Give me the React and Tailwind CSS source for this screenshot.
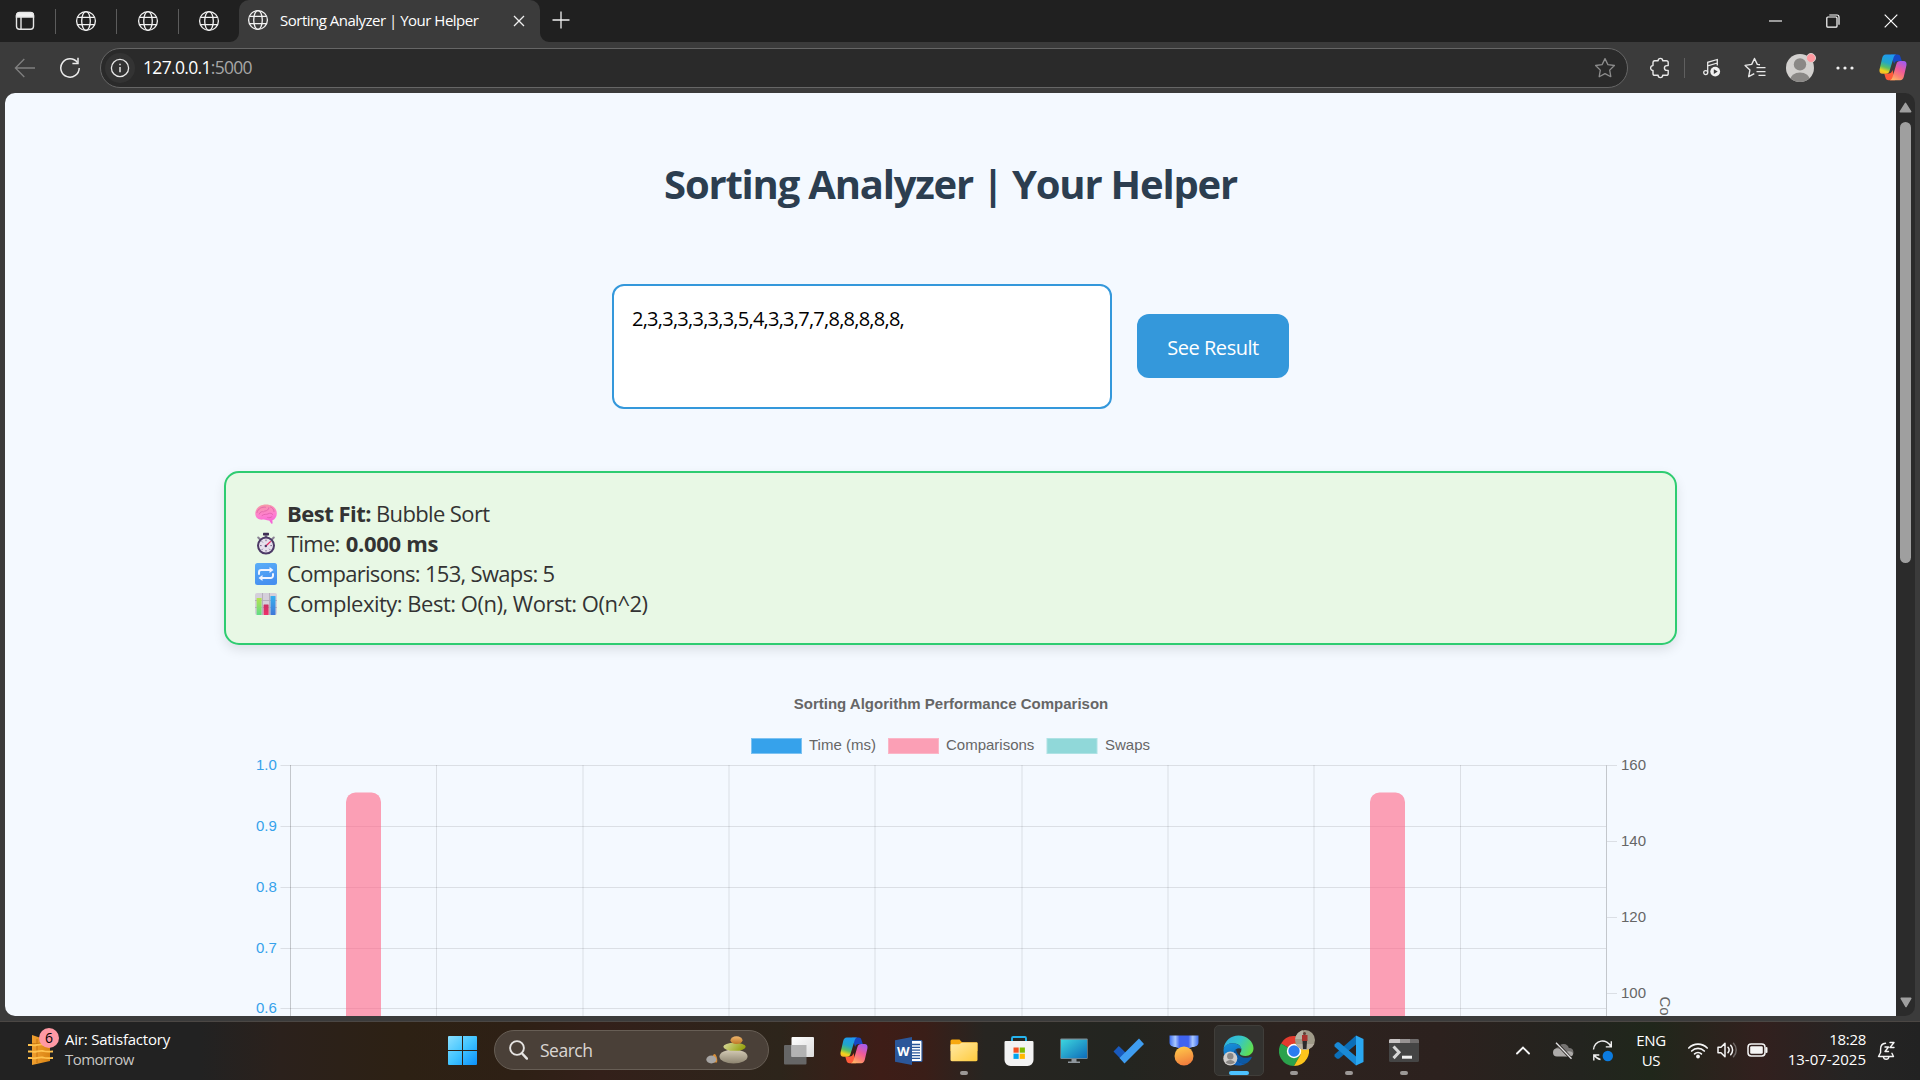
import React from 'react';

const Globe = () => (
  <svg width="22" height="22" viewBox="0 0 22 22" fill="none" stroke="#f2f2f2" strokeWidth="1.3">
    <circle cx="11" cy="11" r="9.4" />
    <ellipse cx="11" cy="11" rx="4.3" ry="9.4" />
    <path d="M2.4 7.4h17.2M2.4 14.6h17.2" />
  </svg>
);

const TabSeparator = () => <div className="h-[25px] w-px bg-[#5c5c5c]" />;

const CopilotIcon = ({ id }) => (
  <svg width="28" height="27" viewBox="0 0 28 27">
    <defs>
      <linearGradient id={id + 'a'} x1="0.5" y1="0" x2="0.2" y2="1">
        <stop offset="0" stopColor="#1f9af0" />
        <stop offset="0.4" stopColor="#22a6c8" />
        <stop offset="0.65" stopColor="#5cc062" />
        <stop offset="0.85" stopColor="#f3d21c" />
        <stop offset="1" stopColor="#f7b32b" />
      </linearGradient>
      <linearGradient id={id + 'b'} x1="0.8" y1="0" x2="0.3" y2="1">
        <stop offset="0" stopColor="#a15bf0" />
        <stop offset="0.45" stopColor="#ee5a9a" />
        <stop offset="0.75" stopColor="#fb7f72" />
        <stop offset="1" stopColor="#fdb268" />
      </linearGradient>
    </defs>
    <path d="M12 0.6h6.6c1.6 0 2.400 0.800 2.800 2.200l1.400 4.300h-3.800c-2.400 0-3.300 1-3.900 3z" fill="#1747c4" />
    <path d="M16 26.200H9.400c-1.600 0-2.400-0.800-2.800-2.200L5.200 19.600h4.400c2 0 3.200-1.200 3.900-3.600z" fill="#ff5b3a" />
    <path d="M6.8 0.6h10.4c-1.6 0.5-2.3 1.7-2.9 3.8l-3.7 12.3c-0.7 2.2-1.8 3-3.9 3H3.6C1 19.7 0 17.7 0.6 15.2L3.2 4C3.8 1.8 4.8 0.6 6.8 0.6z" fill={'url(#' + id + 'a)'} />
    <path d="M21.2 26.2H10.8c1.6-0.5 2.3-1.7 2.9-3.8l3.7-12.3c0.7-2.2 1.8-3 3.9-3h3.1c2.6 0 3.6 2 3 4.5l-2.6 11.2c-0.6 2.2-1.6 3.4-3.6 3.4z" fill={'url(#' + id + 'b)'} />
  </svg>
);

function TabStrip() {
  return (
    <div className="flex h-[42px] items-center bg-[#202020]">
      <svg className="ml-[15px]" width="20" height="20" viewBox="0 0 20 20" fill="none" stroke="#e6e6e6" strokeWidth="1.4">
        <rect x="1.5" y="1.8" width="17" height="16.4" rx="3" />
        <path d="M1.5 6V4.5a3 3 0 0 1 3-3h11a3 3 0 0 1 3 3V6z" fill="#f2f2f2" />
        <path d="M6 6v12" />
      </svg>
      <div className="flex items-center pl-[20px]">
        <TabSeparator />
        <div className="flex w-[60px] justify-center pr-[1px]"><Globe /></div>
        <TabSeparator />
        <div className="flex w-[61px] justify-center"><Globe /></div>
        <TabSeparator />
        <div className="flex w-[60px] justify-center"><Globe /></div>
      </div>
      <div className="relative flex h-[42px] w-[301px] items-center rounded-t-[10px] bg-[#3b3b3b]">
        <svg className="absolute bottom-0 -left-[9px]" width="9" height="9"><path d="M9 0v9H0a9 9 0 0 0 9-9z" fill="#3b3b3b" /></svg>
        <svg className="absolute bottom-0 -right-[9px]" width="9" height="9"><path d="M0 0v9h9a9 9 0 0 1-9-9z" fill="#3b3b3b" /></svg>
        <div className="ml-[8px] -mt-[2px]"><Globe /></div>
        <span className="ml-[11px] -mt-[3px] w-[220px] text-[15px] leading-[20px] tracking-[-0.5px] whitespace-nowrap text-white">Sorting Analyzer | Your Helper</span>
        <svg className="ml-[13px]" width="12" height="12" viewBox="0 0 12 12" stroke="#f0f0f0" strokeWidth="1.3"><path d="M1 1l10 10M11 1L1 11" /></svg>
      </div>
      <svg className="ml-[12px] -mt-[3px]" width="18" height="18" viewBox="0 0 18 18" stroke="#f0f0f0" strokeWidth="1.3"><path d="M9 0.5v17M0.5 9h17" /></svg>
      <div className="flex-1" />
      <svg className="mr-[44px]" width="13" height="13" viewBox="0 0 13 13"><path d="M0 6h13" stroke="#fff" strokeWidth="1.1" /></svg>
      <svg className="mr-[44px]" width="14" height="14" viewBox="0 0 14 14" fill="none" stroke="#fff" strokeWidth="1.2">
        <rect x="0.8" y="3" width="10.2" height="10.2" rx="1" />
        <path d="M3.3 1h7.7a2 2 0 0 1 2 2v7.8" />
      </svg>
      <svg className="mr-[22px]" width="14" height="14" viewBox="0 0 14 14" stroke="#fff" strokeWidth="1.2"><path d="M0.7 0.7l12.6 12.6M13.3 0.7L0.7 13.3" /></svg>
    </div>
  );
}

function Toolbar() {
  return (
    <div className="flex h-[51px] items-center bg-[#3b3b3b]">
      <svg className="ml-[14px]" width="22" height="20" viewBox="0 0 22 20" fill="none" stroke="#808080" strokeWidth="1.3"><path d="M21 10H1.5M10.3 1L1.4 10l8.9 9" /></svg>
      <svg className="ml-[23px]" width="22" height="22" viewBox="0 0 22 22" fill="none" stroke="#ececec" strokeWidth="1.5">
        <path d="M18.5 5.6A9.2 9.2 0 1 0 20.2 11" />
        <path d="M19 0.8v5.6h-5.6" />
      </svg>
      <div className="ml-[19px] flex h-[40px] w-[1528px] items-center rounded-full border border-[#666] bg-[#2a2a2a]">
        <div className="ml-[4px] flex h-[30px] w-[30px] items-center justify-center rounded-full bg-[#333]">
          <svg width="20" height="20" viewBox="0 0 20 20" fill="none" stroke="#e8e8e8" strokeWidth="1.3">
            <circle cx="10" cy="10" r="8.6" />
            <path d="M10 9v5.2M10 5.7v1.6" strokeWidth="1.5" />
          </svg>
        </div>
        <span className="-mt-[1px] ml-[8px] text-[17.5px] leading-[24px] tracking-[-0.68px] text-white">127.0.0.1<span className="text-[#a6a6a6]">:5000</span></span>
        <div className="flex-1" />
        <svg className="mr-[11px]" width="22" height="22" viewBox="0 0 22 22" fill="none" stroke="#8c8c8c" strokeWidth="1.3" strokeLinejoin="round"><path d="M11 1.6l2.9 6 6.5 0.9-4.7 4.6 1.1 6.6L11 16.6l-5.8 3.1 1.1-6.6L1.6 8.5l6.5-0.9z" /></svg>
      </div>
      <svg className="ml-[22px]" width="20" height="22" viewBox="0 0 20 22" fill="none" stroke="#e8e8e8" strokeWidth="1.4" strokeLinejoin="round">
        <path d="M4.5 3.7h3.6a2.3 2.3 0 0 1 4.6 0h3.6a1.9 1.9 0 0 1 1.9 1.9v3h-1.4a2.4 2.4 0 0 0 0 4.8h1.4v3a1.9 1.9 0 0 1-1.9 1.9h-3.6a2.3 2.3 0 0 1-4.6 0H4.9a1.9 1.9 0 0 1-1.9-1.9v-3a2.4 2.4 0 0 1 0-4.8v-3a1.9 1.9 0 0 1 1.5-1.9z" />
      </svg>
      <div className="ml-[14px] h-[20px] w-px bg-[#5f5f5f]" />
      <svg className="ml-[18px]" width="18" height="20" viewBox="0 0 18 20" fill="none" stroke="#e8e8e8" strokeWidth="1.3">
        <circle cx="2.7" cy="14.6" r="2" />
        <path d="M4.7 14.6V4.3l9.6-2.8v6M4.7 7.8l9.6-2.8" />
        <circle cx="12.2" cy="13.6" r="4.9" fill="#f0f0f0" stroke="none" />
        <path d="M10.8 11.2v4.8l3.9-2.4z" fill="#3b3b3b" stroke="none" />
      </svg>
      <svg className="ml-[23px]" width="22" height="22" viewBox="0 0 22 22" fill="none" stroke="#e8e8e8" strokeWidth="1.4" strokeLinejoin="round">
        <path d="M16 7.8l-2.7-0.4-2.8-5.9-2.8 5.9-6.6 1 4.8 4.6-1.2 6.7 5.6-3" />
        <path d="M12.5 10.6h9M12.5 14.6h9M14.5 18.4h7" strokeWidth="1.3" />
      </svg>
      <div className="relative ml-[20px] h-[28px] w-[28px]">
        <svg width="28" height="28" viewBox="0 0 28 28">
          <defs><clipPath id="av"><circle cx="14" cy="14" r="14" /></clipPath></defs>
          <g clipPath="url(#av)"><rect width="28" height="28" fill="#d2d0ce" /><circle cx="14" cy="10.4" r="6.2" fill="#8a8886" /><ellipse cx="14" cy="26.5" rx="10" ry="8" fill="#8a8886" /></g>
        </svg>
        <div className="absolute -top-[1px] right-[-2px] h-[10px] w-[10px] rounded-full border border-[#d9d0ce] bg-[#ff99a0]" />
      </div>
      <svg className="ml-[22px]" width="18" height="4" viewBox="0 0 18 4" fill="#f0f0f0"><circle cx="2" cy="2" r="1.6" /><circle cx="9" cy="2" r="1.6" /><circle cx="16" cy="2" r="1.6" /></svg>
      <div className="ml-[25px]"><CopilotIcon id="ct" /></div>
    </div>
  );
}

const Brain = () => (
  <svg width="22" height="22" viewBox="0 0 22 22">
    <defs><linearGradient id="br" x1="0.3" y1="0" x2="0.5" y2="1"><stop offset="0" stopColor="#f59aa5" /><stop offset="0.55" stopColor="#ff7fd0" /><stop offset="1" stopColor="#f563d6" /></linearGradient></defs>
    <path d="M0.3 10.500C0.300 5.500 4.800 1.600 11 1.600c6.400 0 10.800 3.600 10.800 8.800 0 3.400-2 6-4.400 6.800l0.200 3.400-1.200 0.200-2.200-3.400c-2.800 0.300-3.800-1.200-6-0.800C3.600 17.200 0.300 14.800 0.300 10.500z" fill="url(#br)" />
    <path d="M2 9.500C3 5.500 7 3.600 10.500 4.200M4.300 11c0.600-2.200 2.700-2.700 4.200-2.200M9.500 8.200c3-0.300 4.300-1.800 4.300-3.400M15.500 4c2 0.800 3.500 2.400 3.500 4.500M7 12.500c2.400-2 4.600-0.600 6-1.600 1.800-1.200 4-0.600 4.800 0.600M12.600 14.500c1.800 0.600 3.200 0.200 4.300-0.800" fill="none" stroke="#dd5fa8" strokeWidth="0.8" strokeLinecap="round" />
  </svg>
);

const Stopwatch = () => (
  <svg width="22" height="24" viewBox="0 0 22 24">
    <rect x="8" y="0.8" width="6" height="2.6" rx="0.6" fill="#3f2f55" />
    <rect x="9.7" y="3" width="2.6" height="2.5" fill="#6f6480" />
    <path d="M3.2 5.500l2 2M18.800 5.500l-2 2" stroke="#8a8294" strokeWidth="2" strokeLinecap="round" />
    <circle cx="11" cy="13.6" r="8" fill="#e6e0ec" stroke="#4c3a66" strokeWidth="2" />
    <path d="M11 7.6v1.6M11 18v1.6M5 13.6h1.6M15.4 13.6h1.6M6.8 9.4l1 1M6.8 17.8l1-1M15.2 17.8l-1-1" stroke="#6c5f80" strokeWidth="0.9" />
    <path d="M10.6 14.2l4.8-4.6" stroke="#e8265e" strokeWidth="1.3" strokeLinecap="round" />
    <circle cx="10.8" cy="14" r="1.2" fill="#4c3a66" />
  </svg>
);

const Repeat = () => (
  <svg width="22" height="22" viewBox="0 0 22 22">
    <defs><linearGradient id="rp" x1="0" y1="0" x2="0.3" y2="1"><stop offset="0" stopColor="#5aaef8" /><stop offset="1" stopColor="#4690f0" /></linearGradient></defs>
    <rect width="22" height="22" rx="2.5" fill="url(#rp)" />
    <path d="M4 11V9.300a2.300 2.300 0 0 1 2.300-2.300H15M18 11v1.700a2.300 2.300 0 0 1-2.300 2.300H7" fill="none" stroke="#f0f4ff" strokeWidth="2" strokeLinecap="round" />
    <path d="M14.500 4l4 3-4 3zM7.500 12l-4 3 4 3z" fill="#f0f4ff" />
  </svg>
);

const BarChartIcon = () => (
  <svg width="22" height="22" viewBox="0 0 22 22">
    <defs>
      <linearGradient id="bg1" x1="0" y1="0" x2="0" y2="1"><stop offset="0" stopColor="#b6e34f" /><stop offset="1" stopColor="#5fdc86" /></linearGradient>
      <linearGradient id="bg2" x1="0" y1="0" x2="0" y2="1"><stop offset="0" stopColor="#c92f62" /><stop offset="1" stopColor="#f0306a" /></linearGradient>
      <linearGradient id="bg3" x1="0" y1="0" x2="0" y2="1"><stop offset="0" stopColor="#35b0ee" /><stop offset="1" stopColor="#3f78d8" /></linearGradient>
    </defs>
    <rect width="22" height="22" rx="2" fill="#d5d0da" />
    <path d="M7.500 0v22M14.500 0v22M0 7.500h22M0 14.500h22" stroke="#b2acb9" strokeWidth="0.9" />
    <rect x="1.6" y="5" width="5" height="17" rx="0.5" fill="url(#bg1)" />
    <rect x="8.6" y="11.5" width="5" height="10.5" rx="0.5" fill="url(#bg2)" />
    <rect x="15.5" y="3" width="5" height="19" rx="0.5" fill="url(#bg3)" />
  </svg>
);

function ResultLine({ icon, children }) {
  return (
    <div className="flex h-[30px] items-center">
      <div className="mt-[2px] shrink-0">{icon}</div>
      {children}
    </div>
  );
}

function ResultBox() {
  return (
    <div className="mx-[219px] mt-[62px] flex h-[174px] flex-col rounded-[15px] border-2 border-[#2ecc71] bg-[#e8f8e5] pt-[25px] pl-[29px] text-[22px] leading-[30px] whitespace-nowrap text-[#333] shadow-[0_5px_12px_rgba(0,0,0,0.1)]">
      <ResultLine icon={<Brain />}><b className="ml-[10px] tracking-[-0.52px]">Best Fit:</b><span className="ml-[5px] tracking-[-0.62px]">Bubble Sort</span></ResultLine>
      <ResultLine icon={<Stopwatch />}><span className="ml-[10px] tracking-[-0.7px]">Time:</span><b className="ml-[6px] tracking-[-0.28px]">0.000 ms</b></ResultLine>
      <ResultLine icon={<Repeat />}><span className="ml-[10px] tracking-[-0.69px]">Comparisons: 153, Swaps: 5</span></ResultLine>
      <ResultLine icon={<BarChartIcon />}><span className="ml-[10px] tracking-[-0.49px]">Complexity: Best: O(n), Worst: O(n^2)</span></ResultLine>
    </div>
  );
}

const LEFT_TICKS = [['1.0', 765.5], ['0.9', 826.5], ['0.8', 887.5], ['0.7', 948.5], ['0.6', 1008.5]];
const RIGHT_TICKS = [['160', 765.5], ['140', 841.5], ['120', 917.5], ['100', 993.5]];
const COLUMNS = [436.5, 583, 729, 875, 1022, 1168, 1314, 1460.5];
const BARS = [346, 1370];

function Chart() {
  return (
    <svg className="mx-[219px] mt-[35px] block h-[336px] w-[1453px]" viewBox="224 680 1453 336" fontFamily='"Liberation Sans", Arial, sans-serif' fontSize="15">
      <text x="951" y="709" textAnchor="middle" fontWeight="bold" fill="#666">Sorting Algorithm Performance Comparison</text>
      <g strokeWidth="1">
        <rect x="751.5" y="738.5" width="50" height="15" fill="#36a2eb" stroke="#7cc2f2" />
        <rect x="888.5" y="738.5" width="50" height="15" fill="#fb9fb5" stroke="#fbb6c7" />
        <rect x="1047" y="738.5" width="50" height="15" fill="#90d8d9" stroke="#aee2e4" />
      </g>
      <g fill="#666">
        <text x="809" y="750">Time (ms)</text>
        <text x="946" y="750">Comparisons</text>
        <text x="1105" y="750">Swaps</text>
      </g>
      <g stroke="#000" strokeOpacity="0.1">
        {LEFT_TICKS.map(([l, y]) => <path key={l} d={`M280.5 ${y}H1606`} />)}
        {COLUMNS.map((x) => <path key={x} d={`M${x} 765V1016`} />)}
        {RIGHT_TICKS.map(([l, y]) => <path key={l} d={`M1607 ${y}h10`} />)}
      </g>
      <path d="M290.5 765V1016M1606.5 765V1016" stroke="#000" strokeOpacity="0.2" />
      {BARS.map((x) => <path key={x} d={`M${x} 1016V802a9.5 9.5 0 0 1 9.5-9.5h16a9.500 9.500 0 0 1 9.500 9.500V1016z`} fill="#ff6384" fillOpacity="0.6" />)}
      <g fill="#36a2eb" textAnchor="end">
        {LEFT_TICKS.map(([l, y]) => <text key={l} x="276.8" y={y + 4.5}>{l}</text>)}
      </g>
      <g fill="#666">
        {RIGHT_TICKS.map(([l, y]) => <text key={l} x="1621" y={y + 4.5}>{l}</text>)}
        <text transform="translate(1659.5 996.5) rotate(90)">Co</text>
      </g>
    </svg>
  );
}

function Page() {
  return (
    <div className="flex h-[923px] w-[1910px] overflow-hidden rounded-[10px] bg-[#2b2b2b]">
      <main className="flex h-[923px] w-[1891px] shrink-0 flex-col overflow-hidden bg-[#f4f9ff]">
        <h1 className="mt-[61px] h-[60px] text-center text-[40px] leading-[60px] font-bold tracking-[-1.21px] text-[#2c3e50]">Sorting Analyzer | Your Helper</h1>
        <div className="mt-[70px] flex h-[125px] justify-center gap-[25px]">
          <div className="h-[125px] w-[500px] rounded-[12px] border-2 border-[#3498db] bg-white pt-[19px] pl-[18px] text-[20px] leading-[28px] tracking-[-0.75px] text-black">2,3,3,3,3,3,3,5,4,3,3,7,7,8,8,8,8,8,</div>
          <button className="mt-[30px] h-[64px] w-[152px] rounded-[12px] bg-[#3498db] pt-[4px] text-[20px] tracking-[-0.46px] text-white">See Result</button>
        </div>
        <ResultBox />
        <Chart />
      </main>
      <div className="flex flex-1 flex-col items-center">
        <svg className="mt-[9px]" width="13" height="11" viewBox="0 0 13 11"><path d="M6.5 1.3L11.7 9.700H1.300z" fill="#9f9f9f" stroke="#9f9f9f" strokeLinejoin="round" strokeWidth="1.5" /></svg>
        <div className="mt-[9px] h-[441px] w-[11px] rounded-full bg-[#9f9f9f]" />
        <div className="flex-1" />
        <svg className="mb-[8px]" width="12" height="11" viewBox="0 0 12 11"><path d="M6 9.500L10.800 1.300H1.200z" fill="#9f9f9f" stroke="#9f9f9f" strokeLinejoin="round" strokeWidth="1.5" /></svg>
      </div>
    </div>
  );
}

const Weather = () => (
  <svg width="27" height="32" viewBox="0 0 27 32">
    <defs><linearGradient id="we" x1="0" y1="0" x2="1" y2="0"><stop offset="0" stopColor="#f0a030" /><stop offset="1" stopColor="#d98312" /></linearGradient></defs>
    <path d="M4 1l18 6v20L4 31z" fill="url(#we)" />
    <path d="M9 5v24M4 9.500c5 1 8-1.500 18 0" fill="none" stroke="#c87510" strokeWidth="1" />
    <path d="M0 11h3.500c4 1.500 7-1.500 11.500-0.500 3 1 6 0.500 10 0.500M0 17.500h3.500c4 1.500 7-1.500 11.500-0.500 3 1 6 0.500 10 0.500M0 24h3.500c4 1.500 7-1.500 11.500-0.500 3 1 6 0.500 10 0.500" fill="none" stroke="#ffc24e" strokeWidth="1.8" />
  </svg>
);

const Pebbles = () => (
  <svg width="42" height="28" viewBox="0 0 42 28">
    <defs>
      <linearGradient id="p1" x1="0" y1="0" x2="0" y2="1"><stop offset="0" stopColor="#d6cdb8" /><stop offset="1" stopColor="#8d8470" /></linearGradient>
      <linearGradient id="p2" x1="0" y1="0" x2="1" y2="0.3"><stop offset="0" stopColor="#d9d9a0" /><stop offset="1" stopColor="#98a412" /></linearGradient>
      <linearGradient id="p3" x1="0" y1="0" x2="0" y2="1"><stop offset="0" stopColor="#eeb56c" /><stop offset="1" stopColor="#bd7424" /></linearGradient>
    </defs>
    <path d="M6 26.500c-1-4 1-8.500 2.500-8.500S12 23 11 26.500z" fill="#d88d35" />
    <ellipse cx="5.3" cy="23.5" rx="5" ry="3.9" fill="#a7a5a4" />
    <ellipse cx="27.5" cy="20.5" rx="14" ry="7" fill="url(#p1)" />
    <ellipse cx="28.5" cy="10.8" rx="11.2" ry="4" fill="url(#p2)" />
    <ellipse cx="30.5" cy="4.2" rx="6" ry="3.9" fill="url(#p3)" />
  </svg>
);

const WindowsLogo = () => (
  <svg width="29" height="29" viewBox="0 0 29 29">
    <defs><linearGradient id="wl" gradientUnits="userSpaceOnUse" x1="0" y1="0" x2="29" y2="29"><stop offset="0" stopColor="#8be0ff" /><stop offset="0.5" stopColor="#41c4ff" /><stop offset="1" stopColor="#0b90fa" /></linearGradient></defs>
    <path d="M0 1a1 1 0 0 1 1-1h13v14H0zM15 0h13a1 1 0 0 1 1 1v13H15zM0 15h14v14H1a1 1 0 0 1-1-1zM15 15h14v13a1 1 0 0 1-1 1H15z" fill="url(#wl)" />
  </svg>
);

const TaskView = () => (
  <svg width="30" height="28" viewBox="0 0 30 28">
    <defs><linearGradient id="tv" x1="0" y1="0" x2="1" y2="1"><stop offset="0" stopColor="#fff" /><stop offset="1" stopColor="#dcdcdc" /></linearGradient></defs>
    <rect x="0" y="8" width="22.5" height="19.5" rx="1" fill="#666" />
    <rect x="7.5" y="0" width="22.5" height="20" rx="1" fill="url(#tv)" />
    <path d="M7.500 8h15v12h-15z" fill="#a8a8a8" opacity="0.85" />
  </svg>
);

const Word = () => (
  <svg width="28" height="28" viewBox="0 0 28 28">
    <rect x="13" y="3.5" width="14" height="21" rx="1" fill="#fff" stroke="#2b579a" strokeWidth="1.2" />
    <path d="M17 7.500h8M17 10.300h8M17 13.100h8M17 15.900h8M17 18.700h8M17 21.300h8" stroke="#2b579a" strokeWidth="1.3" />
    <path d="M0 3.200L17 0v28L0 24.800z" fill="#2b579a" />
    <text x="8.4" y="18.8" fontFamily='"Open Sans", sans-serif' fontSize="13" fontWeight="bold" fill="#fff" textAnchor="middle">W</text>
  </svg>
);

const Folder = () => (
  <svg width="28" height="24" viewBox="0 0 28 24">
    <defs><linearGradient id="fo" x1="0" y1="0" x2="1" y2="1"><stop offset="0" stopColor="#ffe9a6" /><stop offset="1" stopColor="#ffcb3d" /></linearGradient></defs>
    <path d="M0.500 2a1.500 1.500 0 0 1 1.500-1.500h7.500L12 3.200h14.500A1 1 0 0 1 27.500 4v8H0.500z" fill="#f8a90f" />
    <path d="M0.500 6.300c0-0.700 0.500-1.100 1.200-1.100h7.500l2.800-1.700h14.500c0.600 0 1 0.400 1 1v16.300c0 0.900-0.500 1.400-1.400 1.400H1.900c-0.900 0-1.400-0.500-1.400-1.400z" fill="url(#fo)" />
  </svg>
);

const Store = () => (
  <svg width="30" height="30" viewBox="0 0 30 30">
    <path d="M8 6V2.200A1.200 1.200 0 0 1 9.200 1h11.600A1.200 1.200 0 0 1 22 2.200V6" fill="none" stroke="#26b4ee" strokeWidth="1.9" />
    <path d="M0.500 6.200a1.200 1.200 0 0 1 1.200-1.200h26.600a1.200 1.200 0 0 1 1.200 1.200V24a6 6 0 0 1-6 6h-17a6 6 0 0 1-6-6z" fill="#f3f3f3" />
    <path d="M9.500 11.500h5.200v5.200H9.500z" fill="#f25022" /><path d="M15.700 11.500h5.200v5.200h-5.200z" fill="#7fba00" />
    <path d="M9.500 17.700h5.200v5.200H9.500z" fill="#00a4ef" /><path d="M15.700 17.700h5.200v5.200h-5.200z" fill="#ffb900" />
  </svg>
);

const Monitor = () => (
  <svg width="28" height="26" viewBox="0 0 28 26">
    <defs><linearGradient id="mo" x1="0" y1="0" x2="1" y2="1"><stop offset="0" stopColor="#3cd5de" /><stop offset="1" stopColor="#0e6bb8" /></linearGradient></defs>
    <rect x="0.3" y="0.5" width="27.4" height="20.5" rx="1" fill="#7d8b93" />
    <rect x="1" y="1.7" width="26" height="18.5" fill="url(#mo)" />
    <path d="M11.500 21h5v2.500h3.500v1.500H8v-1.500h3.500z" fill="#8f979d" />
  </svg>
);

const ToDo = () => (
  <svg width="32" height="26" viewBox="0 0 32 26">
    <path d="M0.500 13.500L5.800 8l9 8.800-3.600 7.700z" fill="#195abd" />
    <path d="M26 0.500l5 5.500-19.500 19.500-5-5.500z" fill="#3f9df0" />
  </svg>
);

const Medal = () => (
  <svg width="30" height="31" viewBox="0 0 30 31">
    <defs>
      <linearGradient id="m1" x1="0" y1="0" x2="1" y2="0"><stop offset="0" stopColor="#3f6ff0" /><stop offset="0.2" stopColor="#a9c8ff" /><stop offset="0.35" stopColor="#3f63f0" /><stop offset="0.65" stopColor="#3f63f0" /><stop offset="0.8" stopColor="#a9c8ff" /><stop offset="1" stopColor="#3f6ff0" /></linearGradient>
      <linearGradient id="m2" x1="0.3" y1="0" x2="0.6" y2="1"><stop offset="0" stopColor="#ffc94a" /><stop offset="1" stopColor="#f07a3c" /></linearGradient>
    </defs>
    <path d="M0.500 0.500h29V7.500c0 3-3 4.500-6 4.500L15 15 6.500 12c-3 0-6-1.500-6-4.500z" fill="url(#m1)" />
    <circle cx="15" cy="21" r="9.5" fill="url(#m2)" />
  </svg>
);

const Edge = () => (
  <svg width="31" height="31" viewBox="0 0 31 31">
    <defs>
      <linearGradient id="e1" x1="0" y1="0.2" x2="1" y2="0.6"><stop offset="0" stopColor="#2eb0e4" /><stop offset="0.5" stopColor="#36c6c6" /><stop offset="1" stopColor="#62e04a" /></linearGradient>
      <linearGradient id="e2" x1="0" y1="0" x2="0.4" y2="1"><stop offset="0" stopColor="#1794dc" /><stop offset="1" stopColor="#0d5fb8" /></linearGradient>
    </defs>
    <path d="M0.600 13.500C1.600 5.800 8 0.500 15.500 0.500c8.400 0 15 6.200 15 12.800 0 4.700-3.500 7.700-8 7.700-3.600 0-5.600-1.200-5.600-2.300 0-0.900 1.500-1.500 1.500-4.200 0-3.400-3.800-6.300-8.400-6.300-4.200 0-7.800 2-9.400 5.300z" fill="url(#e1)" />
    <path d="M0.500 15.500C0.600 10.500 5 8.200 9.500 8.200c5 0 8.700 2.600 8.900 6-1.600-2-6.500-1.200-7.300 3.300-1 5.600 4.400 12 11.900 11C20.500 30 18 30.500 15.500 30.500 7 30.500 0.500 24 0.500 15.500z" fill="url(#e2)" />
    <path d="M11 17.500c0.300-1.500 1-2.700 2.200-3.300 0 4.500 4.300 8.600 9.800 8.600 2 0 3.500-0.500 4.700-0.900 0.900-0.300 1.300 0.300 0.900 0.900-1 2.300-3.200 4.700-5.600 5.700C15.500 29.500 10.200 23.500 11 17.500z" fill="#0c59a4" />
    <circle cx="7.3" cy="23.5" r="7" fill="#cfcdcb" /><circle cx="7.3" cy="21.3" r="3.2" fill="#8a8886" /><path d="M2.700 27.600c1.500-3.500 7.700-3.500 9.200 0a7 7 0 0 1-9.200 0z" fill="#8a8886" />
  </svg>
);

const Chrome = () => (
  <svg width="30" height="30" viewBox="0 0 30 30">
    <path d="M15 15L2 7.500A15 15 0 0 1 28 7.500H15z" fill="#e33b2e" />
    <path d="M15 15L2 7.500A15 15 0 0 0 15 30l6.500-11.200z" fill="#2ba24c" />
    <path d="M15 7.500h13A15 15 0 0 1 15 30l6.500-11.200z" fill="#fcc41c" />
    <circle cx="15" cy="15" r="7.2" fill="#fff" /><circle cx="15" cy="15" r="5.7" fill="#2b7cf0" />
  </svg>
);

const VsCode = () => (
  <svg width="30" height="31" viewBox="0 0 30 31">
    <path d="M22 0.500L0.500 19.500v2L3 23.700h2L22 9.500z" fill="#0c6fb8" />
    <path d="M22 30.500L0.500 11.500v-2L3 7.300h2L22 21.500z" fill="#1a8ad6" />
    <path d="M22 0.500L29.500 4v23L22 30.500z" fill="#2aa8f2" />
  </svg>
);

const Terminal = () => (
  <svg width="30" height="23" viewBox="0 0 30 23">
    <rect width="30" height="23" rx="1.5" fill="#454545" />
    <path d="M0 1.500A1.500 1.500 0 0 1 1.500 0H11v4H0z" fill="#c8c4c4" /><path d="M11 0h10v4H11z" fill="#979393" /><path d="M21 0h7.500A1.500 1.500 0 0 1 30 1.500V4h-9z" fill="#6f6c6c" />
    <path d="M4.500 7.500l5.500 5.800-5.500 5.800" fill="none" stroke="#d6d6d6" strokeWidth="3" />
    <path d="M13 18.200h10" stroke="#f2f2f2" strokeWidth="3" />
  </svg>
);

function AppCell({ children, dot }) {
  return (
    <div className="flex h-[50px] w-[55px] shrink-0 flex-col items-center">
      <div className="flex h-[45px] items-center justify-center pt-[4px]">{children}</div>
      {dot && <div className="h-[4px] w-[8px] shrink-0 rounded-full bg-[#9c9896]" />}
    </div>
  );
}

function Taskbar() {
  return (
    <div className="h-[59px] border-t border-[#4b4744] bg-[linear-gradient(90deg,#222222_0px,#222222_200px,#2b211c_280px,#2d2114_400px,#2e2015_520px,#33201a_600px,#2d251b_780px,#3e1d17_880px,#3a1e18_925px,#272521_985px,#232520_1120px,#2d231f_1280px,#2c211e_1440px,#23241f_1580px,#20271b_1650px,#32201e_1760px,#252423_1850px,#222222_1920px)] text-white">
      <div className="flex h-[58px] items-start">
        <div className="flex w-[448px] shrink-0 pl-[28px]">
          <div className="relative mt-[12px] h-[32px] w-[27px]">
            <Weather />
            <div className="absolute -top-[6px] left-[11px] flex h-[20px] w-[20px] items-center justify-center rounded-full bg-[#ff99a4] text-[14px] leading-[20px] text-black">6</div>
          </div>
          <div className="mt-[7px] ml-[10px] text-[15px] leading-[20px]">
            <div className="tracking-[-0.22px]">Air: Satisfactory</div>
            <div className="tracking-[-0.55px] text-[#c8c6c4]">Tomorrow</div>
          </div>
        </div>
        <div className="mt-[14px]"><WindowsLogo /></div>
        <div className="mt-[8px] ml-[17px] flex h-[40px] w-[275px] shrink-0 items-center rounded-full border border-[#675e55] bg-[#4a4038]">
          <svg className="ml-[14px]" width="19" height="20" viewBox="0 0 19 20" fill="none" stroke="#e6e4e2" strokeLinecap="round"><circle cx="8" cy="8" r="6.900" strokeWidth="1.900" /><path d="M12.900 13.200l5 5.400" strokeWidth="2.400" /></svg>
          <span className="ml-[12px] text-[17.5px] leading-[24px] tracking-[-0.5px] text-[#dad6d3]">Search</span>
          <div className="flex-1" />
          <div className="mr-[20px]"><Pebbles /></div>
        </div>
        <div className="mt-[4px] ml-[2px] flex">
          <AppCell><TaskView /></AppCell>
          <AppCell><CopilotIcon id="cb" /></AppCell>
          <AppCell><Word /></AppCell>
          <AppCell dot><Folder /></AppCell>
          <AppCell><Store /></AppCell>
          <AppCell><Monitor /></AppCell>
          <AppCell><ToDo /></AppCell>
          <AppCell><Medal /></AppCell>
          <div className="flex h-[50px] w-[55px] shrink-0 justify-center">
            <div className="-mt-px flex h-[51px] w-[50px] flex-col items-center rounded-[5px] border border-[#403e3a] bg-[#33322f]">
              <div className="flex h-[45px] items-center pt-[4px]"><Edge /></div>
              <div className="h-[4px] w-[20px] shrink-0 rounded-full bg-[#4cc2ff]" />
            </div>
          </div>
          <AppCell dot>
            <div className="relative">
              <Chrome />
              <svg className="absolute -top-[6px] left-[16px]" width="20" height="20" viewBox="0 0 20 20">
                <defs><clipPath id="ph"><circle cx="10" cy="10" r="10" /></clipPath></defs>
                <g clipPath="url(#ph)"><rect width="20" height="20" fill="#9f9a88" /><rect width="8" height="9" fill="#b5b3a4" /><rect y="14" width="20" height="6" fill="#b5ada0" /><circle cx="9.5" cy="3.5" r="1.5" fill="#5c4038" /><path d="M7 5h5.500v6H7z" fill="#a8332e" /><path d="M7.500 11h4.500l-0.500 8H8z" fill="#2d2b2c" /></g>
              </svg>
            </div>
          </AppCell>
          <AppCell dot><VsCode /></AppCell>
          <AppCell dot><Terminal /></AppCell>
        </div>
        <svg className="mt-[24px] ml-[84px]" width="16" height="9" viewBox="0 0 16 9" fill="none" stroke="#f5f5f5" strokeWidth="1.9" strokeLinecap="round"><path d="M2 7.500L8 1.500l6 6" /></svg>
        <svg className="mt-[20px] ml-[22px]" width="21" height="18" viewBox="0 0 21 18">
          <path d="M3.500 13.500a4.500 4.500 0 0 1 2-8.300A5.500 5.500 0 0 1 15.800 6a4.300 4.300 0 0 1 1.200 8.500z" fill="#757371" />
          <path d="M4 14.600a4 4 0 0 1 0-8c4.500-0.500 7 4 9 3.500 2-1.500 6.500-1 7 1.500 0 2-1.200 3-3 3z" fill="#adaba9" />
          <path d="M3.500 1l15 16" stroke="#2a2623" strokeWidth="3" /><path d="M3 0.800l15.500 16" stroke="#e4e4e4" strokeWidth="1.3" />
        </svg>
        <svg className="mt-[18px] ml-[18px]" width="22" height="22" viewBox="0 0 22 22" fill="none" stroke="#f0f0f0" strokeWidth="1.4">
          <path d="M1.500 9.500A9 9 0 0 1 18.800 6.500M19.300 1.200v5.700h-5.500M8.500 19.500A9 9 0 0 1 2.500 15.500M1.800 20.500V15h5.500" />
          <circle cx="15.8" cy="16" r="5.2" fill="#0c7ce0" stroke="none" />
        </svg>
        <div className="mt-[8px] ml-[20px] w-[34px] text-center text-[15px] leading-[20px] tracking-[-0.4px]">ENG<br />US</div>
        <svg className="mt-[19px] ml-[19px]" width="22" height="18" viewBox="0 0 22 18" fill="none" stroke="#f5f5f5" strokeWidth="1.7" strokeLinecap="round">
          <path d="M1.800 7a13 13 0 0 1 18.400 0M4.700 10a9 9 0 0 1 12.600 0M7.600 12.900a5 5 0 0 1 6.800 0" /><circle cx="11" cy="15.5" r="1.9" fill="#f5f5f5" stroke="none" />
        </svg>
        <svg className="mt-[19px] ml-[8px]" width="21" height="18" viewBox="0 0 21 18" fill="none" stroke="#f5f5f5" strokeWidth="1.5" strokeLinecap="round" strokeLinejoin="round">
          <path d="M1 6.200h3L8 2.200v13.600l-4-4H1z" /><path d="M11 6.300c1.300 1.500 1.300 3.900 0 5.400M13.700 4.200c2.500 2.700 2.500 6.900 0 9.600" /><path d="M16.500 2.200c3.600 3.800 3.600 9.800 0 13.600" stroke="#6f6866" />
        </svg>
        <svg className="mt-[21px] ml-[9px]" width="22" height="14" viewBox="0 0 22 14"><rect x="1" y="1" width="17" height="12" rx="3.2" fill="none" stroke="#f5f5f5" strokeWidth="1.5" /><rect x="3.2" y="3.2" width="12.6" height="7.6" rx="1.2" fill="#f5f5f5" /><path d="M19.500 5v4" stroke="#f5f5f5" strokeWidth="2" strokeLinecap="round" /></svg>
        <div className="mt-[7px] ml-[9px] w-[88px] text-right text-[15px] leading-[20px]"><div className="tracking-[-0.3px]">18:28</div><div>13-07-2025</div></div>
        <svg className="mt-[19px] ml-[11px]" width="19" height="20" viewBox="0 0 19 20" fill="none" stroke="#f5f5f5" strokeWidth="1.4" strokeLinejoin="round" strokeLinecap="round">
          <path d="M8.500 2.200C5 2.500 3.600 5.500 3.600 8v3.500L1.500 15.500h15l-1.600-3.200" /><path d="M6.500 16c0.300 3 5 3 5.300 0" />
          <path d="M8 6h3.500L8 10.500h3.500M13 1.500h4l-4 5h4" />
        </svg>
      </div>
    </div>
  );
}

export default function App() {
  return (
    <div className="h-[1080px] w-[1920px] overflow-hidden bg-[#3b3b3b] font-['Open_Sans',sans-serif]">
      <TabStrip />
      <Toolbar />
      <div className="h-[928px] pl-[5px]"><Page /></div>
      <Taskbar />
    </div>
  );
}
